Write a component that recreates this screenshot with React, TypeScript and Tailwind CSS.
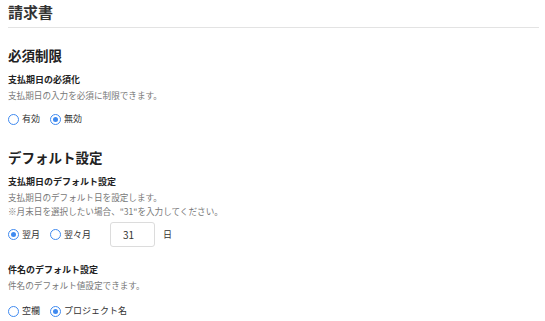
import React, { useState } from "react";

type Option = { value: string; label: string };

function Radio({
  checked,
  label,
  onClick,
}: {
  checked: boolean;
  label: string;
  onClick: () => void;
}) {
  return (
    <label className="flex items-center gap-[3px] cursor-pointer" onClick={onClick}>
      <span className="flex h-[11px] w-[11px] items-center justify-center rounded-full border-[1.5px] border-[#3f8af0] bg-white">
        {checked && <span className="h-[5px] w-[5px] rounded-full bg-[#3f8af0]"></span>}
      </span>
      <span className="text-[9px] leading-[14px] text-[#333]">{label}</span>
    </label>
  );
}

function RadioGroup({
  options,
  value,
  onChange,
}: {
  options: Option[];
  value: string;
  onChange: (v: string) => void;
}) {
  return (
    <div className="flex items-center gap-[10px]">
      {options.map((o) => (
        <Radio
          key={o.value}
          label={o.label}
          checked={value === o.value}
          onClick={() => onChange(o.value)}
        />
      ))}
    </div>
  );
}

export default function App() {
  const [required, setRequired] = useState("off");
  const [month, setMonth] = useState("next");
  const [day, setDay] = useState("31");
  const [title, setTitle] = useState("project");

  return (
    <div
      className="bg-white pl-[8px] pr-[6px] text-[#222]"
      style={{ fontFamily: '"Noto Sans CJK JP", "Noto Sans", sans-serif' }}
    >
      {/* Title */}
      <h1 className="border-b border-[#e3e3e3] pb-[3px] text-[15px] font-bold leading-[24px] text-[#333]">
        請求書
      </h1>

      {/* 必須制限 */}
      <h2 className="mt-[17px] text-[13.5px] font-bold leading-[20px]">必須制限</h2>
      <div className="mt-[8px] text-[9px] font-bold leading-[13px]">支払期日の必須化</div>
      <p className="mt-[2px] text-[8.6px] leading-[14px] text-[#777]">
        支払期日の入力を必須に制限できます。
      </p>
      <div className="mt-[10px]">
        <RadioGroup
          options={[
            { value: "on", label: "有効" },
            { value: "off", label: "無効" },
          ]}
          value={required}
          onChange={setRequired}
        />
      </div>

      {/* デフォルト設定 */}
      <h2 className="mt-[21px] text-[13.5px] font-bold leading-[20px]">デフォルト設定</h2>
      <div className="mt-[8px] text-[9px] font-bold leading-[13px]">支払期日のデフォルト設定</div>
      <p className="mt-[2px] text-[8.6px] leading-[14px] text-[#777]">
        支払期日のデフォルト日を設定します。
        <br />
        ※月末日を選択したい場合、"31"を入力してください。
      </p>
      <div className="mt-[4px] flex h-[25px] items-center">
        <RadioGroup
          options={[
            { value: "next", label: "翌月" },
            { value: "after", label: "翌々月" },
          ]}
          value={month}
          onChange={setMonth}
        />
        <input
          value={day}
          onChange={(e) => setDay(e.target.value)}
          className="ml-[19px] h-[25px] w-[45px] rounded-[3px] border border-[#dcdcdc] px-[12px] text-[10px] text-[#333] outline-none"
        />
        <span className="ml-[8px] text-[9px] text-[#333]">日</span>
      </div>

      <div className="mt-[16px] text-[9px] font-bold leading-[13px]">件名のデフォルト設定</div>
      <p className="mt-[2px] text-[8.6px] leading-[14px] text-[#777]">
        件名のデフォルト値設定できます。
      </p>
      <div className="mt-[12px] pb-[10px]">
        <RadioGroup
          options={[
            { value: "blank", label: "空欄" },
            { value: "project", label: "プロジェクト名" },
          ]}
          value={title}
          onChange={setTitle}
        />
      </div>
    </div>
  );
}
